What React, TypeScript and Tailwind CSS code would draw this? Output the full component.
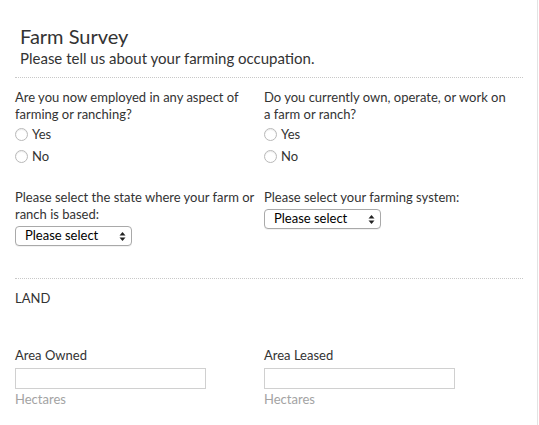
const font = { fontFamily: "Lato, 'Open Sans', sans-serif" };

function Radio({ label }: { label: string }) {
  return (
    <label className="flex items-center gap-[4px] h-[22px] text-[13px] leading-[17px] text-[#333]">
      <span className="w-[13px] h-[13px] rounded-full border border-[#b9b9b9] bg-white shadow-[inset_0_1px_1px_rgba(0,0,0,0.08)]" />
      <span>{label}</span>
    </label>
  );
}

function FakeSelect() {
  return (
    <div className="flex items-center justify-between w-[117px] h-[20px] pl-[9px] pr-[5px] border border-[#a9a9a9] rounded-[4px] bg-white text-[13px] text-black shadow-[0_1px_0_rgba(0,0,0,0.05)]">
      <span>Please select</span>
      <svg width="7" height="11" viewBox="0 0 7 11">
        <path d="M3.5 1 L6.5 4.5 H0.5 Z" fill="#222" />
        <path d="M3.5 10 L6.5 6.5 H0.5 Z" fill="#222" />
      </svg>
    </div>
  );
}

function Question({ text, gap, children }: { text: React.ReactNode; gap: string; children: React.ReactNode }) {
  return (
    <div className="flex flex-col">
      <p className={`text-[13px] leading-[17px] text-[#333] ${gap}`}>{text}</p>
      {children}
    </div>
  );
}

function AreaField({ label }: { label: string }) {
  return (
    <div className="flex flex-col">
      <p className="text-[13px] leading-[17px] text-[#333] mb-[4px]">{label}</p>
      <div className="w-[191px] h-[21px] border border-[#d0d0d0] bg-white" />
      <p className="text-[13px] leading-[17px] text-[#a3a3a3] mt-[2px]">Hectares</p>
    </div>
  );
}

export default function App() {
  return (
    <div className="w-[539px] h-[425px] bg-white overflow-hidden flex" style={font}>
      <div className="w-[537px] pl-[15px] pr-[14px] pt-[24px]">
        <div className="pl-[5px]">
          <h1 className="text-[20px] leading-[25px] text-[#333]">Farm Survey</h1>
          <p className="text-[15px] leading-[18px] text-[#333]">Please tell us about your farming occupation.</p>
        </div>
        <div className="mt-[10px] border-t border-dotted border-[#c8c8c8]" />

        <div className="grid grid-cols-[249px_1fr] mt-[11px]">
          <Question gap="mb-0" text={<>Are you now employed in any aspect of<br />farming or ranching?</>}>
            <Radio label="Yes" />
            <Radio label="No" />
          </Question>
          <Question gap="mb-0" text={<>Do you currently own, operate, or work on<br />a farm or ranch?</>}>
            <Radio label="Yes" />
            <Radio label="No" />
          </Question>
        </div>

        <div className="grid grid-cols-[249px_1fr] mt-[22px] items-start">
          <Question gap="mb-[3px]" text={<>Please select the state where your farm or<br />ranch is based:</>}>
            <FakeSelect />
          </Question>
          <Question gap="mb-[3px]" text="Please select your farming system:">
            <FakeSelect />
          </Question>
        </div>

        <div className="mt-[32px] border-t border-dotted border-[#c8c8c8]" />
        <p className="mt-[11px] text-[13px] leading-[17px] text-[#333]">LAND</p>

        <div className="grid grid-cols-[249px_1fr] mt-[40px]">
          <AreaField label="Area Owned" />
          <AreaField label="Area Leased" />
        </div>
      </div>
      <div className="w-px h-full bg-[#e3e3e3]" />
    </div>
  );
}
